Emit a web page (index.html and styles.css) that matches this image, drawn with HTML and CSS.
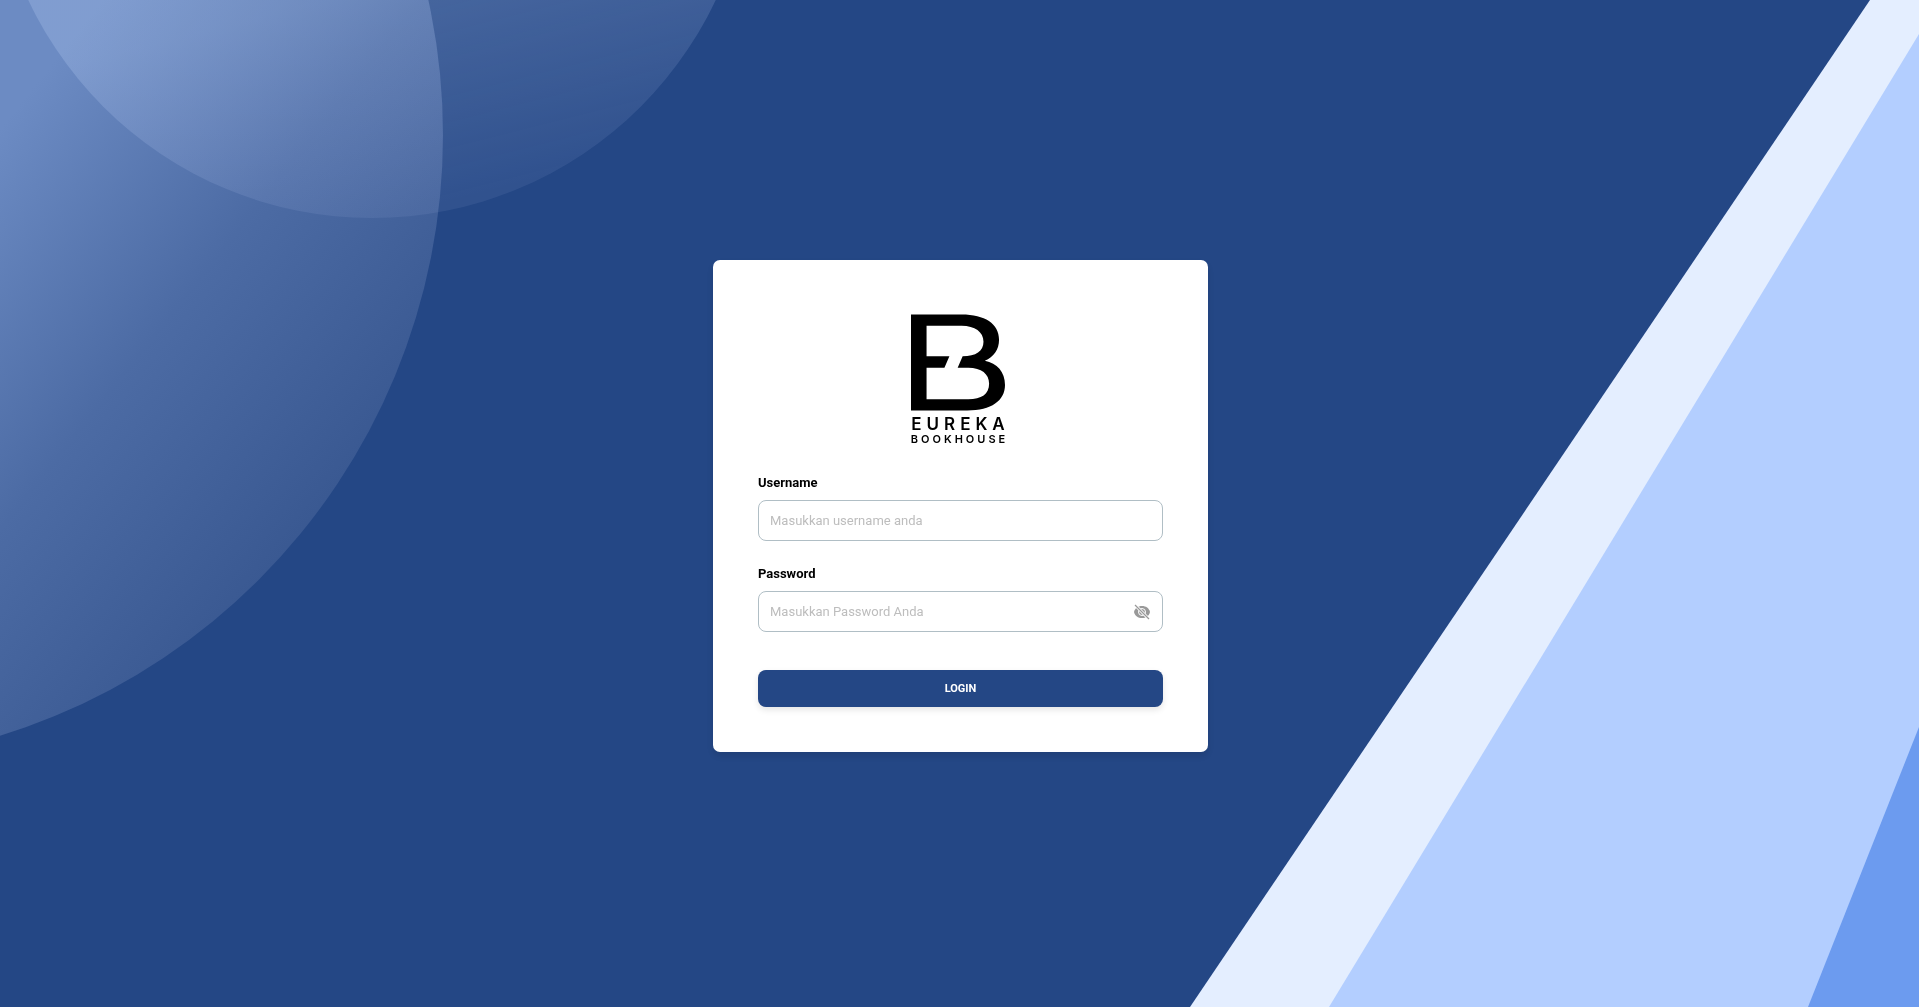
FILE: index.html
```html
<!DOCTYPE html>
<html lang="id">
<head>
  <meta charset="utf-8">
  <meta name="viewport" content="width=device-width, initial-scale=1">
  <title>Login - Eureka Bookhouse</title>
  <link rel="stylesheet" href="styles.css">
</head>
<body>
  <svg class="backdrop" viewBox="0 0 1919 1007" preserveAspectRatio="xMidYMid slice" aria-hidden="true">
    <defs>
      <linearGradient id="side" gradientUnits="userSpaceOnUse" x1="63" y1="50" x2="453" y2="360">
        <stop offset="0" stop-color="#6c8bc3"/>
        <stop offset="0.5" stop-color="#4c6ba4"/>
        <stop offset="1" stop-color="#395891"/>
      </linearGradient>
      <linearGradient id="top" gradientUnits="userSpaceOnUse" x1="330" y1="0" x2="385" y2="217">
        <stop offset="0" stop-color="#c8dcff" stop-opacity="0.22"/>
        <stop offset="1" stop-color="#c8d4ff" stop-opacity="0.08"/>
      </linearGradient>
    </defs>
    <circle cx="-186" cy="135" r="629" fill="url(#side)"/>
    <circle cx="372" cy="-162" r="380" fill="url(#top)"/>
    <path d="M1870 0H1919V1007H1190Z" fill="#e4eeff"/>
    <path d="M1919 34V1007H1329Z" fill="#b3ceff"/>
    <path d="M1919 727V1007H1808Z" fill="#6c9bef"/>
  </svg>

  <main class="page">
    <form class="card">
      <div class="logo">
        <svg class="logo-mark" viewBox="62 42 284 290" aria-hidden="true">
          <path fill-rule="evenodd" d="M62 42H215C285 42 328 70 328 118C328 148 312 170 285 182C322 190 346 215 346 255C346 302 305 332 232 332H62ZM109 76V168H178L163 203H109V298H235C275 298 298 282 298 251C298 222 275 203 235 203H203L218 168C258 168 281 152 281 124C281 95 255 76 215 76Z"/>
        </svg>
        <span class="logo-name">EUREKA</span>
        <span class="logo-sub">BOOKHOUSE</span>
      </div>

      <div class="field">
        <label for="username">Username</label>
        <input id="username" type="text" placeholder="Masukkan username anda">
      </div>

      <div class="field">
        <label for="password">Password</label>
        <div class="password">
          <input id="password" type="password" placeholder="Masukkan Password Anda">
          <button class="toggle" type="button" aria-label="Tampilkan password">
            <svg viewBox="0 0 16 16" aria-hidden="true">
              <path d="M8 2C4 2 1 4 0 8c1 4 4 6 8 6s7-2 8-6c-1-4-4-6-8-6z" fill="#999"/>
              <circle cx="8" cy="8" r="3.5" fill="none" stroke="#fff"/>
              <path d="M1.5 1.5l13.500 13.500" stroke="#fff" stroke-width="3"/>
              <path d="M1 1l14 14" stroke="#999" stroke-width="1.200"/>
            </svg>
          </button>
        </div>
      </div>

      <button class="submit" type="submit">LOGIN</button>
    </form>
  </main>
</body>
</html>
```
FILE: styles.css
```css
* {
  box-sizing: border-box;
}

body {
  margin: 0;
  background: #244785;
  color: #000;
  font: 13px/20px Roboto, sans-serif;
}

.backdrop {
  position: fixed;
  inset: 0;
  z-index: -1;
  width: 100%;
  height: 100%;
}

.page {
  display: flex;
  align-items: center;
  justify-content: center;
  min-height: 100vh;
  padding: 5px 0 0 2px;
}

.card {
  display: flex;
  flex-direction: column;
  gap: 23px;
  width: 100%;
  max-width: 495px;
  padding: 45px;
  border-radius: 7px;
  background: #fff;
  box-shadow: 0 4px 6px rgba(0, 0, 0, 0.1);
}

.logo {
  display: flex;
  flex-direction: column;
  align-items: center;
  align-self: center;
  padding: 9px 5px 6px 0;
  font-family: Inter, sans-serif;
}

.logo-mark {
  width: 94px;
  height: 97px;
  margin-bottom: 3px;
}

.logo-name {
  font-size: 17px;
  font-weight: 600;
  letter-spacing: 5px;
  margin-right: -5px;
}

.logo-sub {
  font-size: 11px;
  font-weight: 600;
  line-height: 10px;
  letter-spacing: 3px;
  margin-right: -3px;
}

.field {
  display: flex;
  flex-direction: column;
  gap: 7px;
}

.field label {
  font-weight: 700;
}

.field input {
  width: 100%;
  height: 41px;
  padding: 0 11px;
  border: 1px solid #b0bec5;
  border-radius: 8px;
  background: #fff;
  color: #000;
  font: inherit;
}

.field input::placeholder {
  color: #bdbdbd;
}

.password {
  position: relative;
}

.password input {
  padding-right: 40px;
}

.toggle {
  position: absolute;
  top: 0;
  right: 13px;
  display: flex;
  align-items: center;
  height: 100%;
  padding: 0;
  border: 0;
  background: none;
  cursor: pointer;
}

.toggle svg {
  width: 16px;
  height: 16px;
}

.submit {
  height: 37px;
  margin-top: 15px;
  border: 0;
  border-radius: 8px;
  background: #244785;
  color: #fff;
  font: 700 11px/16px Roboto, sans-serif;
  box-shadow: 0 3px 6px rgba(0, 0, 0, 0.1);
  cursor: pointer;
}
```
